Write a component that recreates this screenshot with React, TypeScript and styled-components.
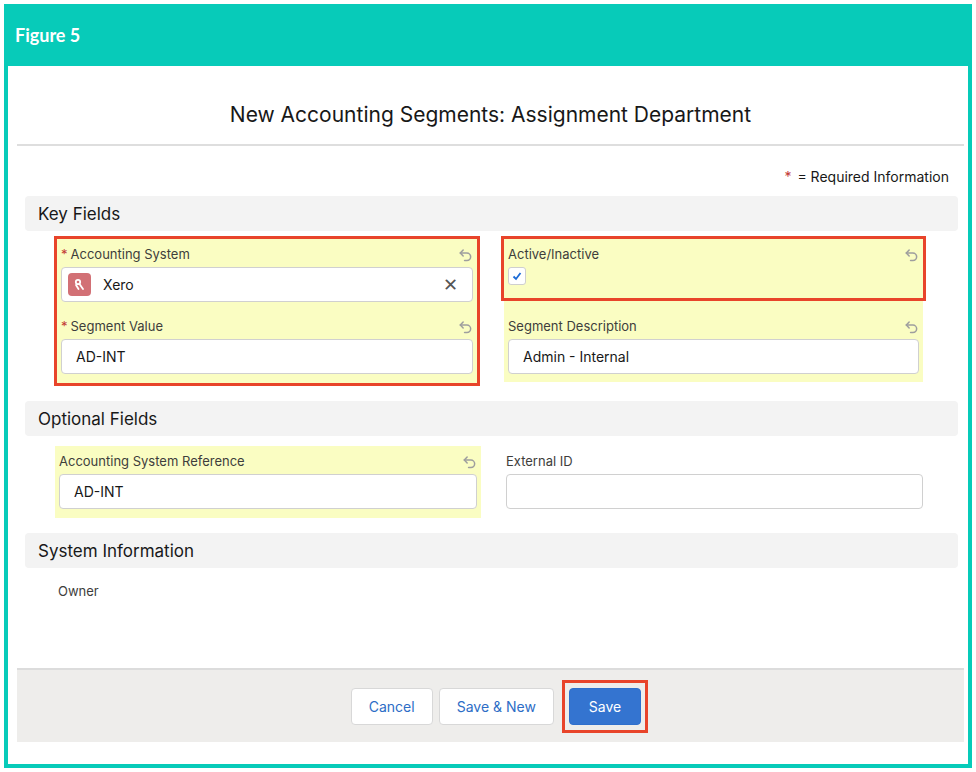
import React from "react";
import styled, { createGlobalStyle } from "styled-components";

const GlobalStyle = createGlobalStyle`
  body { margin: 0; background: #fff; font-family: "Inter", "Liberation Sans", sans-serif; color: #181818; }
`;

const Frame = styled.div`
  margin: 4px;
  width: 968px;
  height: 764px;
  box-sizing: border-box;
  border: 4px solid #07cbb9;
  display: flex;
  flex-direction: column;
`;

const FigureBar = styled.div`
  background: #07cbb9;
  height: 62px;
  margin: -4px -4px 0;
  padding: 0 11px;
  display: flex;
  align-items: center;
  color: #fff;
  font-family: "Lato", sans-serif;
  font-weight: 700;
  font-size: 18px;
`;

const Body = styled.div`
  flex: 1;
  display: flex;
  flex-direction: column;
  padding: 0 4px 0 9px;
`;

const Title = styled.div`
  height: 60px;
  padding-top: 18px;
  display: flex;
  align-items: center;
  justify-content: center;
  font-size: 21px;
  border-bottom: 2px solid #dedede;
`;

const Required = styled.div`
  text-align: right;
  font-size: 14px;
  padding: 22px 15px 0 0;
  height: 28px;
  span { color: #c23934; margin-right: 6px; }
`;

const SectionHeader = styled.div`
  background: #f3f3f3;
  border-radius: 4px;
  height: 35px;
  margin: 0 6px 0 8px;
  padding-left: 13px;
  display: flex;
  align-items: center;
  font-size: 17px;
`;

const Grid = styled.div<{ $top?: number; $left?: number }>`
  display: grid;
  grid-template-columns: 426px 425px;
  column-gap: 21px;
  padding: ${(p) => p.$top ?? 6}px 0 0 ${(p) => p.$left ?? 38}px;
`;

const Column = styled.div`
  display: flex;
  flex-direction: column;
`;

const RedBox = styled.div`
  border: 3px solid #e8442a;
  display: flex;
  flex-direction: column;
`;

const Field = styled.div<{ $hl?: boolean; $h?: number; $top?: number }>`
  background: ${(p) => (p.$hl ? "#fafdc2" : "transparent")};
  padding: ${(p) => p.$top ?? 6}px 4px 8px;
  height: ${(p) => p.$h ?? 72}px;
  box-sizing: border-box;
`;

const InsetField = styled(Field)`
  margin: 0 3px;
`;

const LabelRow = styled.div`
  display: flex;
  justify-content: space-between;
  align-items: center;
  height: 18px;
  font-size: 13px;
  color: #3e3e3c;
  margin-bottom: 4px;
  b { color: #c23934; font-weight: 400; margin-right: 3px; }
`;

const Input = styled.div`
  height: 35px;
  box-sizing: border-box;
  border: 1px solid #d0d0d0;
  border-radius: 4px;
  background: #fff;
  display: flex;
  align-items: center;
  padding: 0 14px;
  font-size: 14px;
  gap: 12px;
`;

const LookupIcon = styled.div`
  width: 23px;
  height: 23px;
  border-radius: 4px;
  background: #d27075;
  display: flex;
  align-items: center;
  justify-content: center;
  margin-left: -8px;
`;

const Clear = styled.span`
  margin-left: auto;
  color: #555;
  font-size: 18px;
`;

const Check = styled.div`
  width: 16px;
  height: 16px;
  border: 1px solid #cfcfcf;
  border-radius: 3px;
  background: #fff;
  display: flex;
  align-items: center;
  justify-content: center;
`;

const Spacer = styled.div`
  height: 15px;
`;

const Owner = styled.div`
  font-size: 13px;
  color: #3e3e3c;
  padding: 15px 0 0 41px;
`;

const Footer = styled.div`
  margin-top: auto;
  margin-bottom: 22px;
  height: 72px;
  background: #eeedeb;
  border-top: 2px solid #dcdcdc;
  display: flex;
  align-items: center;
  justify-content: center;
  gap: 6px;
  padding-left: 18px;
`;

const Button = styled.button<{ $brand?: boolean }>`
  height: 37px;
  padding: 0 ${(p) => (p.$brand ? 19 : 17)}px;
  border-radius: 4px;
  border: 1px solid ${(p) => (p.$brand ? "#2f6fcc" : "#d8d8d8")};
  background: ${(p) => (p.$brand ? "#3474d0" : "#fff")};
  color: ${(p) => (p.$brand ? "#fff" : "#2d6dc6")};
  font-family: inherit;
  font-size: 14px;
`;

const SaveWrap = styled.div`
  border: 3px solid #e8442a;
  padding: 5px 4px;
  margin-left: 2px;
  display: flex;
`;

const Undo = () => (
  <svg width="15" height="15" viewBox="0 0 16 16" fill="none" stroke="#9e9e9e" strokeWidth="1.6" strokeLinecap="round">
    <path d="M2.5 6.5h7a4 4 0 0 1 0 8H7" />
    <path d="M5.5 3.2 2.5 6.5 5.5 9.6" />
  </svg>
);

const Label = ({ text, req, undo = true }: { text: string; req?: boolean; undo?: boolean }) => (
  <LabelRow>
    <span>{req && <b>*</b>}{text}</span>
    {undo && <Undo />}
  </LabelRow>
);

export default function App() {
  return (
    <>
      <GlobalStyle />
      <Frame>
        <FigureBar>Figure 5</FigureBar>
        <Body>
          <Title>New Accounting Segments: Assignment Department</Title>
          <Required><span>*</span>= Required Information</Required>
          <SectionHeader>Key Fields</SectionHeader>
          <Grid $left={37} $top={5}>
            <Column>
              <RedBox>
                <Field $hl $h={72}>
                  <Label text="Accounting System" req />
                  <Input>
                    <LookupIcon>
                      <svg width="14" height="14" viewBox="0 0 14 14" fill="none" stroke="#fff" strokeWidth="1.8" strokeLinecap="round">
                        <circle cx="5" cy="4" r="2.2" />
                        <path d="M6.5 6 10 11M3 7l2.5 4" />
                      </svg>
                    </LookupIcon>
                    Xero
                    <Clear>✕</Clear>
                  </Input>
                </Field>
                <Field $hl $h={72}>
                  <Label text="Segment Value" req />
                  <Input>AD-INT</Input>
                </Field>
              </RedBox>
            </Column>
            <Column>
              <RedBox>
                <Field $hl $h={59}>
                  <Label text="Active/Inactive" />
                  <Check>
                    <svg width="10" height="10" viewBox="0 0 10 10" fill="none" stroke="#1b6bd6" strokeWidth="1.8">
                      <path d="M1.5 5.5 4 8 8.5 2" />
                    </svg>
                  </Check>
                </Field>
              </RedBox>
              <InsetField $hl $h={81} $top={16}>
                <Label text="Segment Description" />
                <Input>Admin - Internal</Input>
              </InsetField>
            </Column>
          </Grid>
          <Spacer />
          <SectionHeader>Optional Fields</SectionHeader>
          <Grid $top={10}>
            <Field $hl $h={72}>
              <Label text="Accounting System Reference" />
              <Input>AD-INT</Input>
            </Field>
            <Field $h={72}>
              <Label text="External ID" undo={false} />
              <Input />
            </Field>
          </Grid>
          <Spacer />
          <SectionHeader>System Information</SectionHeader>
          <Owner>Owner</Owner>
          <Footer>
            <Button>Cancel</Button>
            <Button>Save &amp; New</Button>
            <SaveWrap>
              <Button $brand>Save</Button>
            </SaveWrap>
          </Footer>
        </Body>
      </Frame>
    </>
  );
}
